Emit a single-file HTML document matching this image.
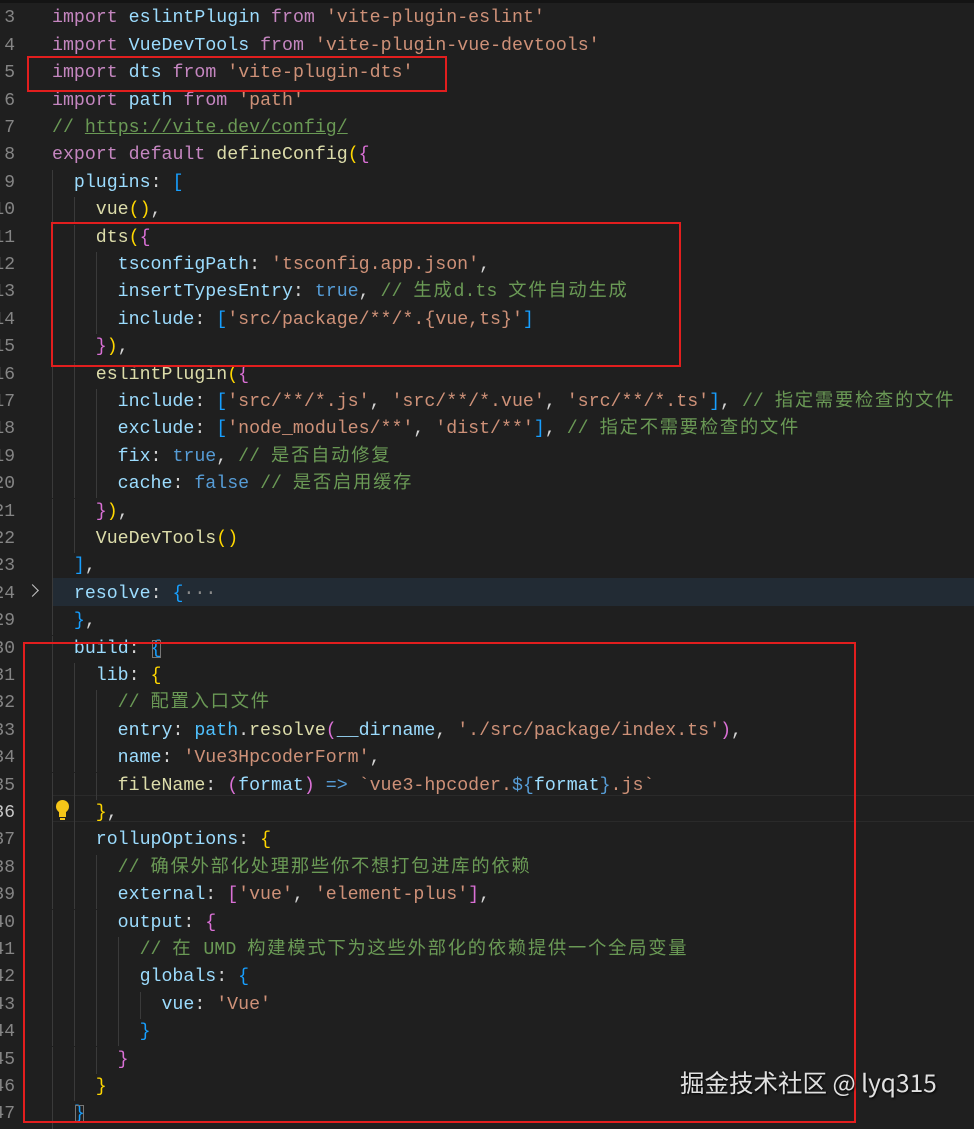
<!DOCTYPE html>
<html><head><meta charset="utf-8"><style>
html,body{margin:0;padding:0;background:#1f1f1f;width:974px;height:1129px;overflow:hidden;position:relative}
.top{position:absolute;left:0;top:0;width:974px;height:3px;background:#141414}
.l{position:absolute;left:52px;height:27.4px;line-height:27.4px;font-family:"Liberation Mono","Noto Sans CJK SC",monospace;font-size:18.25px;white-space:pre;color:#d4d4d4;margin-top:2px}
.n{position:absolute;right:959px;height:27.4px;line-height:27.4px;font-family:"Liberation Mono",monospace;font-size:18px;color:#858585;white-space:pre;margin-top:2px}
i{display:inline-block;width:21.9px;height:27.4px;vertical-align:top;box-sizing:border-box;border-left:1px solid #3a3a3a}
.k{color:#c586c0}.v{color:#9cdcfe}.s{color:#ce9178}.c{color:#6a9955}.f{color:#dcdcaa}.b{color:#569cd6}
.g{color:#ffd700}.p{color:#da70d6}.u{color:#179fff}.t{color:#4fc1ff}
.z{letter-spacing:1.8px}
.box{position:absolute;border:2px solid #e21e1e;box-sizing:border-box}
</style></head><body>
<div class="top"></div>
<div style="position:absolute;left:52px;top:578px;width:922px;height:28px;background:#222b34"></div>
<div style="position:absolute;left:52px;top:795px;width:922px;height:27px;border-top:1px solid #2a2a2a;border-bottom:1px solid #2a2a2a;box-sizing:border-box"></div>

<div class="n" style="top:3.3px">3</div><div class="l" style="top:3.3px"><span class="k">import</span> <span class="v">eslintPlugin</span> <span class="k">from</span> <span class="s">'vite-plugin-eslint'</span></div>
<div class="n" style="top:30.7px">4</div><div class="l" style="top:30.7px"><span class="k">import</span> <span class="v">VueDevTools</span> <span class="k">from</span> <span class="s">'vite-plugin-vue-devtools'</span></div>
<div class="n" style="top:58.1px">5</div><div class="l" style="top:58.1px"><span class="k">import</span> <span class="v">dts</span> <span class="k">from</span> <span class="s">'vite-plugin-dts'</span></div>
<div class="n" style="top:85.5px">6</div><div class="l" style="top:85.5px"><span class="k">import</span> <span class="v">path</span> <span class="k">from</span> <span class="s">'path'</span></div>
<div class="n" style="top:112.9px">7</div><div class="l" style="top:112.9px"><span class="c">// <u>https://vite.dev/config/</u></span></div>
<div class="n" style="top:140.3px">8</div><div class="l" style="top:140.3px"><span class="k">export</span> <span class="k">default</span> <span class="f">defineConfig</span><span class="g">(</span><span class="p">{</span></div>
<div class="n" style="top:167.7px">9</div><div class="l" style="top:167.7px"><i></i><span class="v">plugins</span>: <span class="u">[</span></div>
<div class="n" style="top:195.1px">10</div><div class="l" style="top:195.1px"><i></i><i></i><span class="f">vue</span><span class="g">()</span>,</div>
<div class="n" style="top:222.5px">11</div><div class="l" style="top:222.5px"><i></i><i></i><span class="f">dts</span><span class="g">(</span><span class="p">{</span></div>
<div class="n" style="top:249.9px">12</div><div class="l" style="top:249.9px"><i></i><i></i><i></i><span class="v">tsconfigPath</span>: <span class="s">'tsconfig.app.json'</span>,</div>
<div class="n" style="top:277.3px">13</div><div class="l" style="top:277.3px"><i></i><i></i><i></i><span class="v">insertTypesEntry</span>: <span class="b">true</span>, <span class="c">// <span class="z">生成</span>d.ts <span class="z">文件自动生成</span></span></div>
<div class="n" style="top:304.7px">14</div><div class="l" style="top:304.7px"><i></i><i></i><i></i><span class="v">include</span>: <span class="u">[</span><span class="s">'src/package/**/*.{vue,ts}'</span><span class="u">]</span></div>
<div class="n" style="top:332.1px">15</div><div class="l" style="top:332.1px"><i></i><i></i><span class="p">}</span><span class="g">)</span>,</div>
<div class="n" style="top:359.5px">16</div><div class="l" style="top:359.5px"><i></i><i></i><span class="f">eslintPlugin</span><span class="g">(</span><span class="p">{</span></div>
<div class="n" style="top:386.9px">17</div><div class="l" style="top:386.9px"><i></i><i></i><i></i><span class="v">include</span>: <span class="u">[</span><span class="s">'src/**/*.js'</span>, <span class="s">'src/**/*.vue'</span>, <span class="s">'src/**/*.ts'</span><span class="u">]</span>, <span class="c">// <span class="z">指定需要检查的文件</span></span></div>
<div class="n" style="top:414.3px">18</div><div class="l" style="top:414.3px"><i></i><i></i><i></i><span class="v">exclude</span>: <span class="u">[</span><span class="s">'node_modules/**'</span>, <span class="s">'dist/**'</span><span class="u">]</span>, <span class="c">// <span class="z">指定不需要检查的文件</span></span></div>
<div class="n" style="top:441.7px">19</div><div class="l" style="top:441.7px"><i></i><i></i><i></i><span class="v">fix</span>: <span class="b">true</span>, <span class="c">// <span class="z">是否自动修复</span></span></div>
<div class="n" style="top:469.1px">20</div><div class="l" style="top:469.1px"><i></i><i></i><i></i><span class="v">cache</span>: <span class="b">false</span> <span class="c">// <span class="z">是否启用缓存</span></span></div>
<div class="n" style="top:496.5px">21</div><div class="l" style="top:496.5px"><i></i><i></i><span class="p">}</span><span class="g">)</span>,</div>
<div class="n" style="top:523.9px">22</div><div class="l" style="top:523.9px"><i></i><i></i><span class="f">VueDevTools</span><span class="g">()</span></div>
<div class="n" style="top:551.3px">23</div><div class="l" style="top:551.3px"><i></i><span class="u">]</span>,</div>
<div class="n" style="top:578.7px">24</div><div style="position:absolute;left:28px;top:586px;width:8px;height:8px;border-right:1.6px solid #c5c5c5;border-bottom:1.6px solid #c5c5c5;transform:rotate(-45deg)"></div><div class="l" style="top:578.7px"><i></i><span class="v">resolve</span>: <span class="u">{</span><span style="color:#8a8a8a">···</span></div>
<div class="n" style="top:606.1px">29</div><div class="l" style="top:606.1px"><i></i><span class="u">}</span>,</div>
<div class="n" style="top:633.5px">30</div><div class="l" style="top:633.5px"><i></i><span class="v">build</span>: <span class="u" style="outline:1px solid #777;outline-offset:-2px">{</span></div>
<div class="n" style="top:660.9px">31</div><div class="l" style="top:660.9px"><i></i><i></i><span class="v">lib</span>: <span class="g">{</span></div>
<div class="n" style="top:688.3px">32</div><div class="l" style="top:688.3px"><i></i><i></i><i></i><span class="c">// <span class="z">配置入口文件</span></span></div>
<div class="n" style="top:715.7px">33</div><div class="l" style="top:715.7px"><i></i><i></i><i></i><span class="v">entry</span>: <span class="t">path</span>.<span class="f">resolve</span><span class="p">(</span><span class="v">__dirname</span>, <span class="s">'./src/package/index.ts'</span><span class="p">)</span>,</div>
<div class="n" style="top:743.1px">34</div><div class="l" style="top:743.1px"><i></i><i></i><i></i><span class="v">name</span>: <span class="s">'Vue3HpcoderForm'</span>,</div>
<div class="n" style="top:770.5px">35</div><div class="l" style="top:770.5px"><i></i><i></i><i></i><span class="f">fileName</span>: <span class="p">(</span><span class="v">format</span><span class="p">)</span> <span class="b">=&gt;</span> <span class="s">`vue3-hpcoder.</span><span class="b">${</span><span class="v">format</span><span class="b">}</span><span class="s">.js`</span></div>
<div class="n" style="top:797.9px;color:#c6c6c6">36</div><div class="l" style="top:797.9px"><i></i><i></i><span class="g">}</span>,</div>
<div style="position:absolute;left:56px;top:800px;width:13px;height:13px;border-radius:50%;background:#f5c518"></div><div style="position:absolute;left:59px;top:811px;width:7px;height:6px;background:#f5c518"></div><div style="position:absolute;left:60px;top:818px;width:5px;height:2px;background:#f5c518"></div>
<div class="n" style="top:825.3px">37</div><div class="l" style="top:825.3px"><i></i><i></i><span class="v">rollupOptions</span>: <span class="g">{</span></div>
<div class="n" style="top:852.7px">38</div><div class="l" style="top:852.7px"><i></i><i></i><i></i><span class="c">// <span class="z">确保外部化处理那些你不想打包进库的依赖</span></span></div>
<div class="n" style="top:880.1px">39</div><div class="l" style="top:880.1px"><i></i><i></i><i></i><span class="v">external</span>: <span class="p">[</span><span class="s">'vue'</span>, <span class="s">'element-plus'</span><span class="p">]</span>,</div>
<div class="n" style="top:907.5px">40</div><div class="l" style="top:907.5px"><i></i><i></i><i></i><span class="v">output</span>: <span class="p">{</span></div>
<div class="n" style="top:934.9px">41</div><div class="l" style="top:934.9px"><i></i><i></i><i></i><i></i><span class="c">// <span class="z">在</span> UMD <span class="z">构建模式下为这些外部化的依赖提供一个全局变量</span></span></div>
<div class="n" style="top:962.3px">42</div><div class="l" style="top:962.3px"><i></i><i></i><i></i><i></i><span class="v">globals</span>: <span class="u">{</span></div>
<div class="n" style="top:989.7px">43</div><div class="l" style="top:989.7px"><i></i><i></i><i></i><i></i><i></i><span class="v">vue</span>: <span class="s">'Vue'</span></div>
<div class="n" style="top:1017.1px">44</div><div class="l" style="top:1017.1px"><i></i><i></i><i></i><i></i><span class="u">}</span></div>
<div class="n" style="top:1044.5px">45</div><div class="l" style="top:1044.5px"><i></i><i></i><i></i><span class="p">}</span></div>
<div class="n" style="top:1071.9px">46</div><div class="l" style="top:1071.9px"><i></i><i></i><span class="g">}</span></div>
<div class="n" style="top:1099.3px">47</div><div class="l" style="top:1099.3px"><i></i><span class="u" style="outline:1px solid #777;outline-offset:-2px">}</span></div>

<div class="box" style="left:27px;top:56px;width:420px;height:36px"></div>
<div class="box" style="left:51px;top:222px;width:630px;height:145px"></div>
<div class="box" style="left:23px;top:642px;width:833px;height:481px"></div>

<div style="position:absolute;left:680px;top:1066px;font-family:'Noto Sans CJK SC','Liberation Sans',sans-serif;font-size:24.5px;line-height:34px;color:#e0e0e0;text-shadow:1px 1px 2px #000;white-space:nowrap">掘金技术社区 @ lyq315</div>
</body></html>
